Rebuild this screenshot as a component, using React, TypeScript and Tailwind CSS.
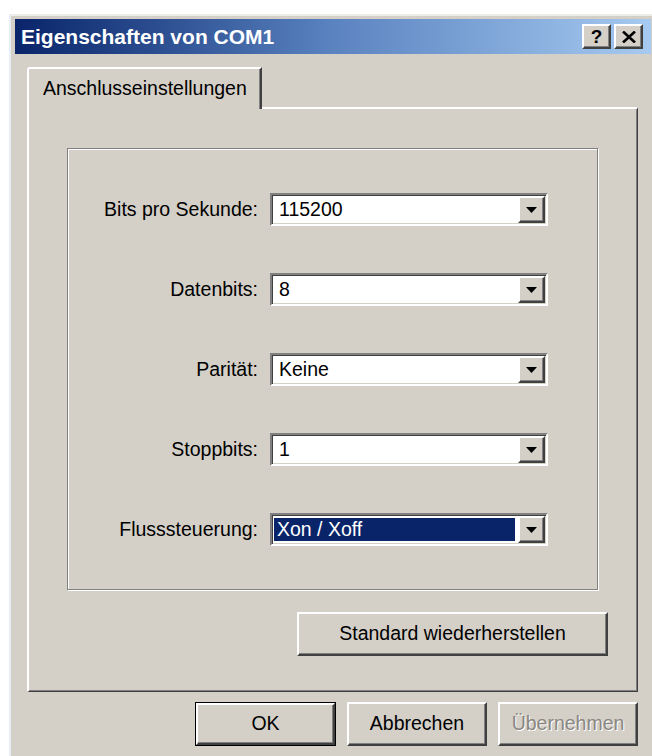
import React from "react";

const raised =
  "bg-[#d4d0c8] border-t-2 border-l-2 border-r-2 border-b-2 border-t-white border-l-white border-r-[#404040] border-b-[#404040] shadow-[inset_-1px_-1px_0_#808080]";

function Arrow() {
  return (
    <svg width="11" height="6" viewBox="0 0 11 6">
      <path d="M0 0 H11 L5.5 6 Z" fill="#000" />
    </svg>
  );
}

function Combo({ value, selected }: { value: string; selected?: boolean }) {
  return (
    <div className="flex h-[33px] w-[278px] border-t-2 border-l-2 border-r-2 border-b-2 border-t-[#808080] border-l-[#808080] border-r-white border-b-white bg-white shadow-[inset_1px_1px_0_#404040,inset_-1px_-1px_0_#d4d0c8]">
      <div className="flex flex-1 items-center p-[3px] pl-[2px]">
        <div
          className={
            selected
              ? "flex h-full w-full items-center bg-[#0a246a] pl-[3px] text-white"
              : "flex h-full w-full items-center pl-[5px] text-black"
          }
        >
          {value}
        </div>
      </div>
      <div className={`mt-[1px] mb-[1px] mr-[1px] flex w-[27px] items-center justify-center ${raised}`}>
        <Arrow />
      </div>
    </div>
  );
}

function Button({
  label,
  width,
  isDefault,
  disabled,
}: {
  label: string;
  width: string;
  isDefault?: boolean;
  disabled?: boolean;
}) {
  const inner = (
    <div
      className={`flex h-full w-full items-center justify-center ${raised} ${
        disabled ? "text-[#8a8781] [text-shadow:1px_1px_0_#fff]" : "text-black"
      }`}
    >
      {label}
    </div>
  );
  if (isDefault) {
    return <div className={`h-[44px] ${width} border border-black`}>{inner}</div>;
  }
  return <div className={`h-[44px] ${width}`}>{inner}</div>;
}

const rows: { label: string; value: string; selected?: boolean }[] = [
  { label: "Bits pro Sekunde:", value: "115200" },
  { label: "Datenbits:", value: "8" },
  { label: "Parität:", value: "Keine" },
  { label: "Stoppbits:", value: "1" },
  { label: "Flusssteuerung:", value: "Xon / Xoff", selected: true },
];

export default function App() {
  return (
    <div className="h-[756px] w-[652px] overflow-hidden bg-white pt-[14px] pl-[9px] font-['Liberation_Sans',Arial,sans-serif] text-[19.5px] leading-none">
      {/* dialog window */}
      <div className="h-[760px] w-[648px] border-t-2 border-l-2 border-t-[#eeece8] border-l-[#e6eef6] bg-[#d4d0c8] pt-[3px] pl-[4px]">
        {/* caption bar */}
        <div className="flex h-[35px] w-[636px] items-center bg-gradient-to-r from-[#0a246a] via-[#5b83c0] to-[#a6caf0] pl-[6px] pr-[8px]">
          <span className="text-[21px] font-bold text-white">Eigenschaften von COM1</span>
          <div className="ml-auto flex gap-[3px]">
            <div className={`flex h-[25px] w-[29px] items-center justify-center text-[19px] font-bold text-black ${raised}`}>
              ?
            </div>
            <div className={`flex h-[25px] w-[29px] items-center justify-center ${raised}`}>
              <svg width="14" height="12" viewBox="0 0 14 12">
                <path d="M1 0.5 L13 11.5 M13 0.5 L1 11.5" stroke="#000" strokeWidth="2.6" />
              </svg>
            </div>
          </div>
        </div>

        {/* property sheet */}
        <div className="ml-[12px] mt-[13px] w-[611px]">
          <div className="relative z-10 mb-[-2px] flex h-[42px] w-[235px] items-center rounded-tl-[3px] border-t-2 border-l-2 border-r-2 border-t-white border-l-white border-r-[#404040] bg-[#d4d0c8] pl-[14px] shadow-[inset_-1px_0_0_#808080]">
            Anschlusseinstellungen
          </div>
          <div className="flex h-[585px] w-[611px] flex-col border-t-2 border-l-2 border-r border-b border-t-white border-l-white border-r-[#404040] border-b-[#404040] pt-[39px] pl-[38px] shadow-[inset_-1px_-1px_0_#808080]">
            <div className="h-[442px] w-[531px] border border-[#808080] pt-[44px] shadow-[inset_1px_1px_0_#fff,1px_1px_0_#fff]">
              <div className="grid grid-cols-[190px_278px] gap-x-[12px] gap-y-[47px]">
                {rows.map((r) => (
                  <React.Fragment key={r.label}>
                    <div className="flex items-center justify-end text-black">{r.label}</div>
                    <Combo value={r.value} selected={r.selected} />
                  </React.Fragment>
                ))}
              </div>
            </div>
            <div className="mt-[22px] flex justify-end pr-[29px]">
              <Button label="Standard wiederherstellen" width="w-[311px]" />
            </div>
          </div>

          {/* dialog buttons */}
          <div className="mt-[10px] flex justify-end gap-[11px]">
            <Button label="OK" width="w-[141px]" isDefault />
            <Button label="Abbrechen" width="w-[140px]" />
            <Button label="Übernehmen" width="w-[140px]" disabled />
          </div>
        </div>
      </div>
    </div>
  );
}
